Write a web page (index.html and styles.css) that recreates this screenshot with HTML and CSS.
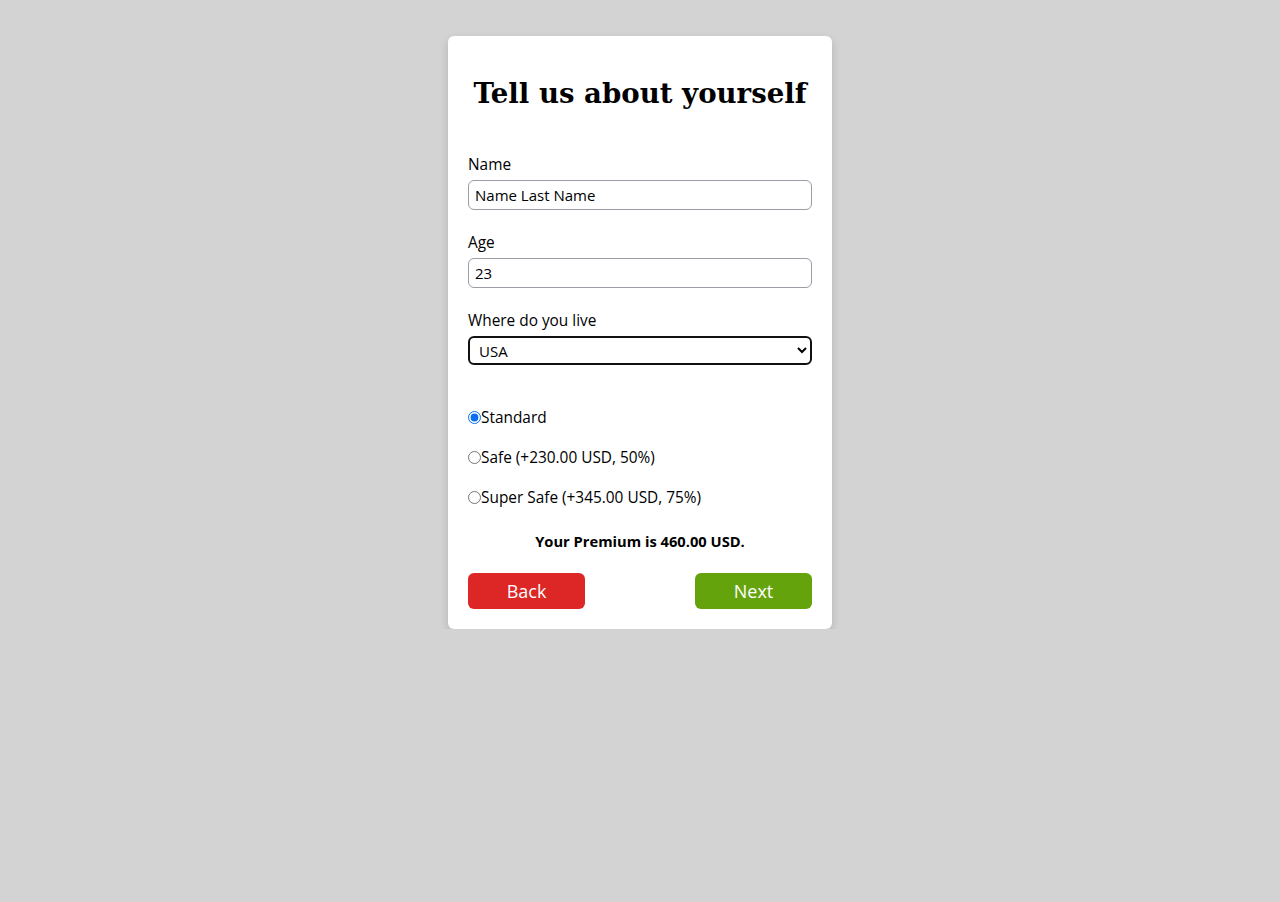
FILE: index.html
```html
<!DOCTYPE html>
<html>
<head>
<meta charset="utf-8">
<link rel="stylesheet" href="styles.css">
</head>
<body>
<div class="card">
  <h1 class="title">Tell us about yourself</h1>
  <div class="field">
    <label class="label" for="name">Name</label>
    <input class="input" id="name" type="text" value="Name Last Name">
  </div>
  <div class="field">
    <label class="label" for="age">Age</label>
    <input class="input" id="age" type="text" value="23">
  </div>
  <div class="field">
    <label class="label" for="country">Where do you live</label>
    <select class="select" id="country"><option>USA</option></select>
  </div>
  <div class="radios">
    <label class="radio"><input type="radio" name="plan" checked>Standard</label>
    <label class="radio"><input type="radio" name="plan">Safe (+230.00 USD, 50%)</label>
    <label class="radio"><input type="radio" name="plan">Super Safe (+345.00 USD, 75%)</label>
  </div>
  <p class="premium">Your Premium is 460.00 USD.</p>
  <div class="actions">
    <button class="btn btn-back">Back</button>
    <button class="btn btn-next">Next</button>
  </div>
</div>
</body>
</html>
```
FILE: styles.css
```css
html, body {
  margin: 0;
  padding: 0;
}
body {
  background: #d3d3d3;
  font-family: "Open Sans", "Noto Sans", sans-serif;
  font-size: 15.4px;
  color: #000;
  padding-top: 36px;
}
.card {
  width: 344px;
  margin: 0 auto;
  background: #fff;
  border-radius: 6px;
  padding: 20px;
  box-shadow: 0 4px 10px rgba(0,0,0,0.15);
  display: flex;
  flex-direction: column;
}
.title {
  font-family: "DejaVu Serif", "Liberation Serif", serif;
  font-weight: bold;
  font-size: 27.6px;
  line-height: 38px;
  text-align: center;
  margin: 19px 0 41px;
}
.field {
  display: flex;
  flex-direction: column;
  margin-bottom: 22px;
}
.label {
  line-height: 21px;
  margin-bottom: 5px;
}
.input {
  height: 30px;
  box-sizing: border-box;
  border: 1px solid #9a9ca6;
  border-radius: 6px;
  padding: 0 6px;
  font-family: inherit;
  font-size: 15px;
  color: #000;
}
.select {
  height: 29px;
  box-sizing: border-box;
  border: 2px solid #111;
  border-radius: 6px;
  padding: 0 5px;
  font-family: inherit;
  font-size: 15px;
  color: #000;
  background: #fff;
}
.radios {
  display: flex;
  flex-direction: column;
  gap: 19px;
  margin-top: 20px;
}
.radio {
  display: flex;
  align-items: center;
  line-height: 21px;
}
.radio input {
  margin: 0;
  width: 13px;
  height: 13px;
  accent-color: #0b6ff0;
}
.premium {
  text-align: center;
  font-weight: bold;
  font-size: 14.7px;
  line-height: 21px;
  margin: 23px 0 21px;
}
.actions {
  display: flex;
  justify-content: space-between;
}
.btn {
  width: 117px;
  height: 36px;
  border: none;
  border-radius: 6px;
  color: #fff;
  font-family: inherit;
  font-size: 18px;
}
.btn-back {
  background: #dd2626;
}
.btn-next {
  background: #65a30d;
}
```
